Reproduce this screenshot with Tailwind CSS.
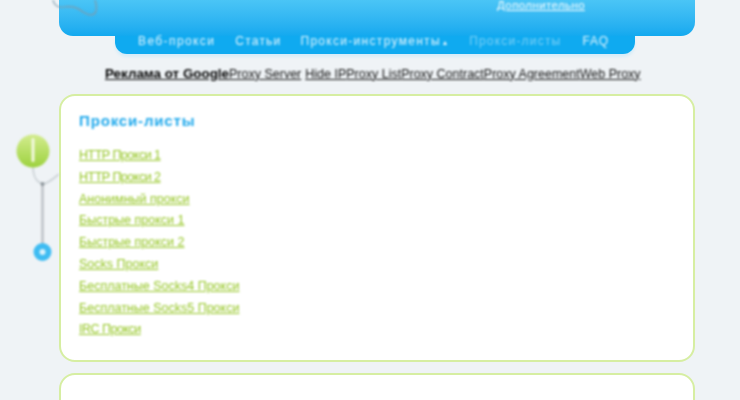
<!DOCTYPE html>
<html lang="ru">
<head>
    <meta charset="UTF-8">
    <title>Прокси-листы</title>
    <script src="https://cdn.jsdelivr.net/npm/@tailwindcss/browser@4"></script>
</head>
<body class="relative h-[400px] w-[740px] overflow-hidden bg-[#eff3f6] font-['Liberation_Sans',Arial,sans-serif]">
    <!-- header -->
    <div class="ml-[59px] w-[636px]">
        <header class="flex h-[36px] items-start justify-end rounded-b-[14px] bg-gradient-to-b from-[#4ac5f6] to-[#12a9ef] pr-[110px]">
            <a href="#" class="text-[11.5px] leading-[11px] tracking-[0.4px] text-white underline blur-[0.8px]">Дополнительно</a>
        </header>
        <nav class="ml-[56px] mr-[60px] flex h-[18px] items-start rounded-b-[12px] bg-[#0faaf0] pl-[23px] text-[12px] leading-[10px] tracking-[1.4px] text-white/90 shadow-[0_3px_3px_#d5ecf8]">
            <a href="#" class="blur-[0.8px]">Веб-прокси</a>
            <a href="#" class="ml-[20px] tracking-[1.2px] blur-[0.8px]">Статьи</a>
            <a href="#" class="ml-[19px] tracking-[1.3px] blur-[0.8px]">Прокси-инструменты<span class="ml-[2px] text-[8px]">▴</span></a>
            <a href="#" class="ml-[21px] tracking-[1.2px] text-white/45 blur-[0.8px]">Прокси-листы</a>
            <a href="#" class="ml-[21px] tracking-[0.8px] blur-[0.8px]">FAQ</a>
        </nav>
        <div class="ml-[46px] mt-[12px] flex h-[16px] items-center whitespace-nowrap text-[12.5px] text-[#111] blur-[0.8px]">
            <a href="#" class="text-[13.4px] font-bold text-black underline">Реклама от Google</a>
            <a href="#" class="underline">Proxy Server</a>
            <a href="#" class="ml-[4px] underline">Hide IP</a>
            <a href="#" class="underline">Proxy List</a>
            <a href="#" class="underline">Proxy Contract</a>
            <a href="#" class="underline">Proxy Agreement</a>
            <a href="#" class="underline">Web Proxy</a>
        </div>
        <!-- cards -->
        <section class="mt-[12px] h-[268px] rounded-[16px] border-2 border-[#d6eea2] bg-white pl-[18px] pt-[15px]">
            <h2 class="text-[15px] font-bold leading-[20px] tracking-[0.85px] text-[#1fa9ec] blur-[0.8px]">Прокси-листы</h2>
            <ul class="mt-[17px] flex flex-col gap-[6px] text-[12.5px] leading-[15.8px] text-[#93c520] underline blur-[0.8px]">
                <li class="tracking-[-0.5px]"><a href="#">HTTP Прокси 1</a></li>
                <li class="tracking-[-0.5px]"><a href="#">HTTP Прокси 2</a></li>
                <li><a href="#">Анонимный прокси</a></li>
                <li><a href="#">Быстрые прокси 1</a></li>
                <li><a href="#">Быстрые прокси 2</a></li>
                <li><a href="#">Socks Прокси</a></li>
                <li><a href="#">Бесплатные Socks4 Прокси</a></li>
                <li><a href="#">Бесплатные Socks5 Прокси</a></li>
                <li class="tracking-[-0.5px]"><a href="#">IRC Прокси</a></li>
            </ul>
        </section>
        <section class="mt-[11px] h-[60px] rounded-[16px] border-2 border-[#d6eea2] bg-white"></section>
    </div>
    <!-- decoration beside the card -->
    <svg class="absolute left-[14px] top-[132px] blur-[0.8px]" width="50" height="132" viewBox="0 0 50 132">
        <defs>
            <linearGradient id="ball" x1="0" y1="0" x2="0" y2="1">
                <stop offset="0" stop-color="#d3ec8e"/>
                <stop offset="1" stop-color="#9dd23f"/>
            </linearGradient>
        </defs>
        <path d="M19 34c0 11 3 16 10 18 6-1 10-5 16-10" fill="none" stroke="#c6cdd1" stroke-width="1.5"/>
        <path d="M28.5 52V112" stroke="#bcc1c6" stroke-width="2.5"/>
        <circle cx="28.5" cy="52" r="2" fill="#8d959a"/>
        <circle cx="19" cy="19" r="16.5" fill="url(#ball)"/>
        <rect x="17.5" y="6" width="3" height="24" rx="1.5" fill="#f3f9e0"/>
        <circle cx="28.5" cy="120" r="6" fill="#d8f2fc" stroke="#3fbcf2" stroke-width="6"/>
    </svg>
    <!-- logo tail on the header -->
    <svg class="absolute left-[50px] top-0 blur-[0.8px]" width="50" height="18" viewBox="0 0 50 18">
        <path d="M3 0c1 5 5 8 11 7 7-1 13 0 19 5 5 3 11 5 13-1 1-4 0-8-1-11" fill="none" stroke="#7f9bab" stroke-width="1.2"/>
    </svg>
</body>
</html>
